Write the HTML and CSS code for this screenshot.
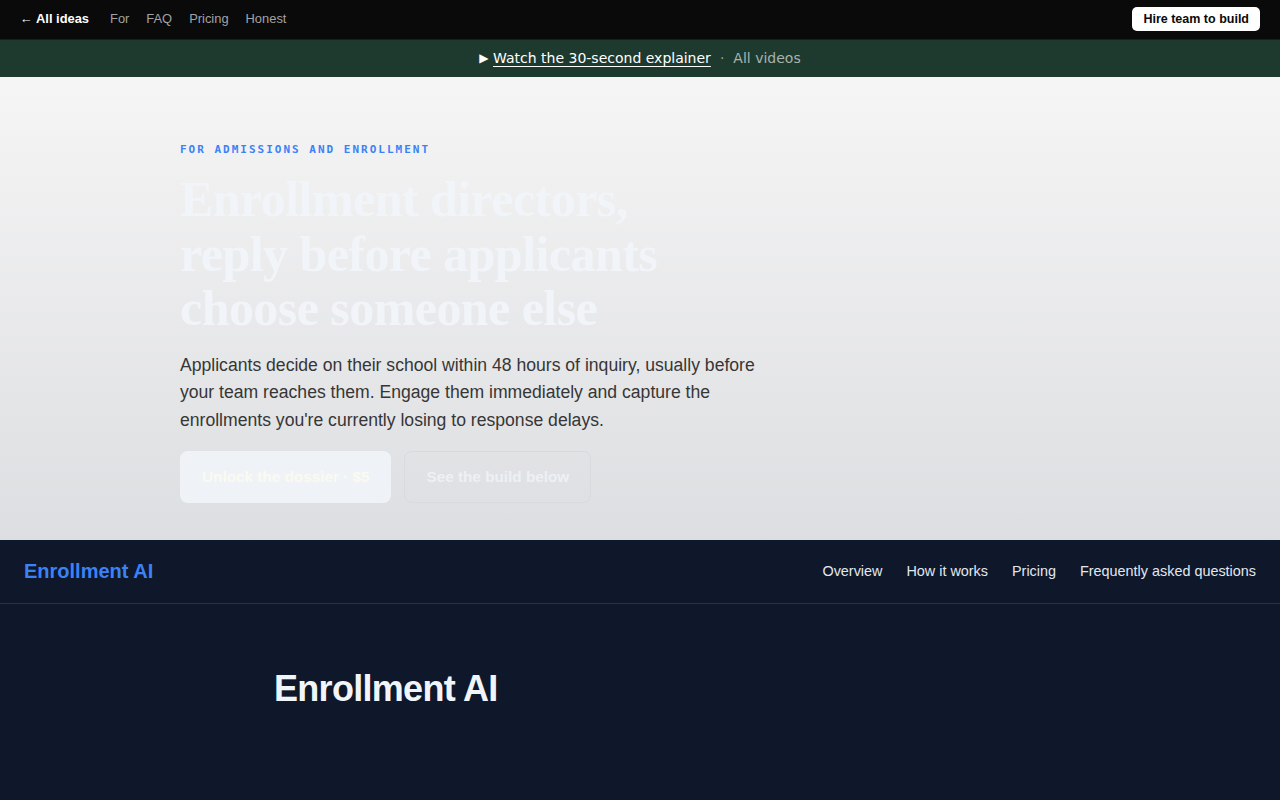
FILE: index.html
```html
<!DOCTYPE html>
<html lang="en">
<head>
<meta charset="utf-8">
<title>Enrollment AI</title>
<link rel="stylesheet" href="styles.css">
</head>
<body>
<header class="topbar">
  <nav class="topnav">
    <a class="back" href="#">← All ideas</a>
    <a class="toplink" href="#">For</a>
    <a class="toplink" href="#">FAQ</a>
    <a class="toplink" href="#">Pricing</a>
    <a class="toplink" href="#">Honest</a>
  </nav>
  <a class="hire" href="#">Hire team to build</a>
</header>
<div class="banner">
  <span class="play">▶</span>&nbsp;<a class="watch" href="#">Watch the 30-second explainer</a><span class="dot">·</span><a class="videos" href="#">All videos</a>
</div>
<section class="hero">
  <div class="hero-inner">
    <p class="eyebrow">FOR ADMISSIONS AND ENROLLMENT</p>
    <h1 class="hero-title">Enrollment directors, reply before applicants choose someone else</h1>
    <p class="hero-lead">Applicants decide on their school within 48 hours of inquiry, usually before your team reaches them. Engage them immediately and capture the enrollments you're currently losing to response delays.</p>
    <div class="actions">
      <a class="btn btn-primary" href="#">Unlock the dossier · $5</a>
      <a class="btn btn-ghost" href="#">See the build below</a>
    </div>
  </div>
</section>
<section class="app">
  <nav class="appnav">
    <a class="brand" href="#">Enrollment AI</a>
    <div class="applinks">
      <a href="#">Overview</a>
      <a href="#">How it works</a>
      <a href="#">Pricing</a>
      <a href="#">Frequently asked questions</a>
    </div>
  </nav>
  <div class="app-body">
    <h2 class="app-title">Enrollment AI</h2>
  </div>
</section>
</body>
</html>
```

FILE: styles.css
```css
* { box-sizing: border-box; }
html, body { margin: 0; padding: 0; }
body {
  font-family: "Liberation Sans", Arial, sans-serif;
  background: #0f172a;
  min-height: 800px;
}
a { text-decoration: none; color: inherit; }

.topbar {
  height: 40px;
  background: #0a0a0a;
  border-bottom: 1px solid #1c1c1c;
  display: flex;
  align-items: center;
  justify-content: space-between;
  padding: 0 20px 0 20px;
}
.topnav { display: flex; align-items: center; gap: 17px; font-size: 12.9px; margin-top: -2px; }
.back { color: #ffffff; font-weight: 700; margin-right: 4px; }
.toplink { color: #a3a3a3; }
.hire {
  background: #ffffff;
  color: #0a0a0a;
  font-size: 12.5px;
  font-weight: 700;
  height: 24px;
  line-height: 24px;
  padding: 0 11px;
  border-radius: 5px;
  margin-top: -2px;
}

.banner {
  height: 37px;
  background: #1e3a2f;
  display: flex;
  align-items: center;
  justify-content: center;
  font-family: "DejaVu Sans", sans-serif;
  font-size: 14px;
  color: #ffffff;
  padding-bottom: 2px;
}
.play { font-size: 12px; }
.watch { color: #ffffff; text-decoration: underline; text-underline-offset: 3px; }
.dot { color: #94a39b; margin: 0 9px; }
.videos { color: #a7b3ad; }

.hero {
  height: 463px;
  background: linear-gradient(180deg, #f5f5f5 0%, #dddee1 100%);
  padding: 65px 180px 0;
}
.eyebrow {
  margin: 0;
  font-family: "DejaVu Sans Mono", monospace;
  font-weight: 700;
  font-size: 11px;
  letter-spacing: 2px;
  color: #3b82f6;
  line-height: 16px;
}
.hero-title {
  margin: 14px 0 0;
  max-width: 540px;
  font-family: "Liberation Serif", "Times New Roman", serif;
  font-weight: 700;
  font-size: 50px;
  line-height: 54.5px;
  letter-spacing: -0.55px;
  color: #f1f4f8;
}
.hero-lead {
  margin: 16px 0 0;
  max-width: 600px;
  font-size: 17.6px;
  line-height: 27.5px;
  color: #363636;
}
.actions { display: flex; gap: 13px; margin-top: 17px; }
.btn {
  height: 52px;
  display: flex;
  align-items: center;
  padding: 0 22px;
  border-radius: 8px;
  font-size: 15.3px;
  font-weight: 700;
}
.btn-primary { background: #eff3f8; color: #fbfaf0; }
.btn-ghost { border: 1px solid #d9dade; color: #eef0f5; padding: 0 21px; }

.app { background: #0f172a; }
.appnav {
  height: 64px;
  border-bottom: 1px solid #273246;
  display: flex;
  align-items: center;
  justify-content: space-between;
  padding: 0 24px;
}
.brand { color: #3b82f6; font-weight: 700; font-size: 20px; }
.applinks { display: flex; gap: 24px; font-size: 14.4px; margin-top: -2px; }
.applinks a { color: #e2e8f0; }
.app-body { padding: 63px 274px 0; }
.app-title {
  margin: 0;
  font-size: 36px;
  font-weight: 700;
  color: #f1f5f9;
  letter-spacing: -0.7px;
  line-height: 44px;
}
```
